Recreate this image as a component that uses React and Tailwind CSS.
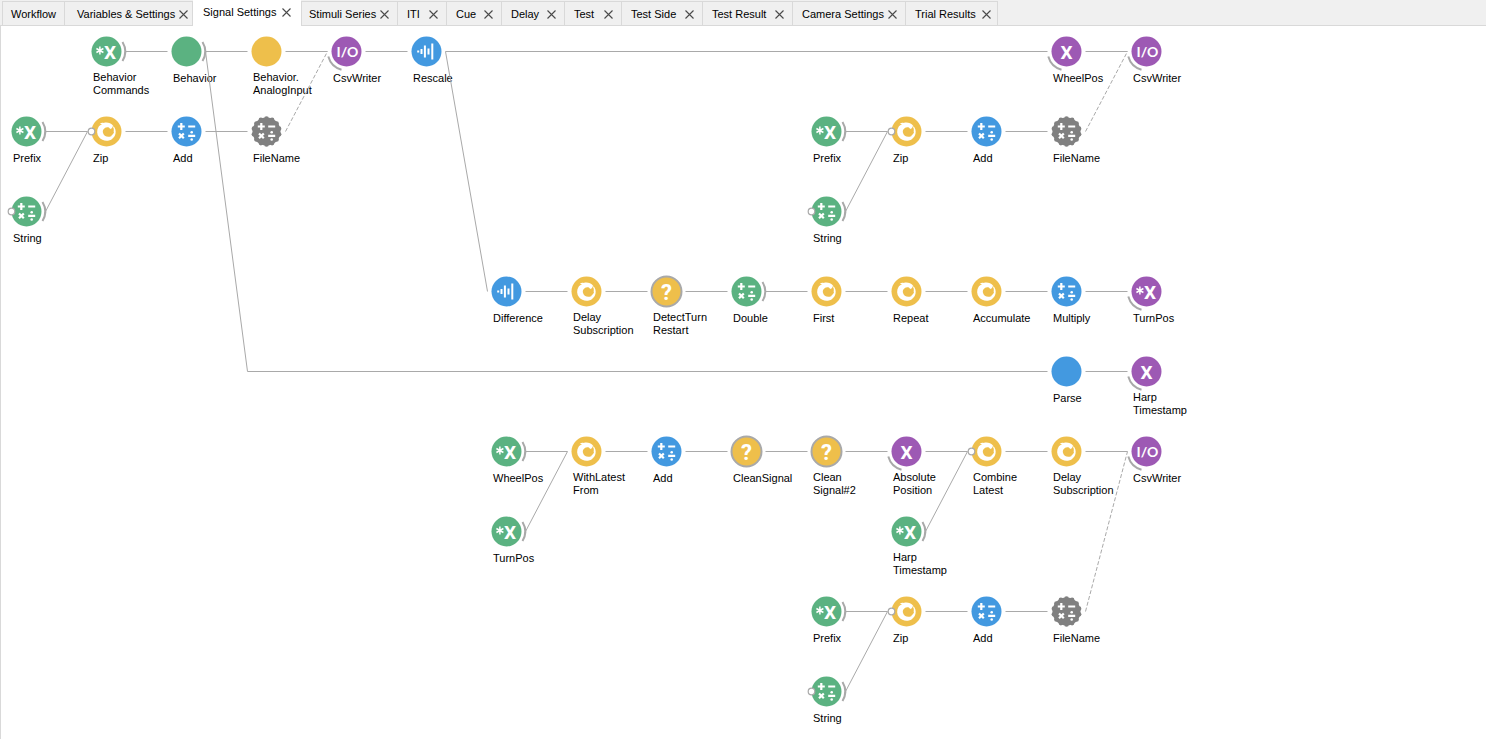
const GRID = 80;
const cx = (col) => 26.5 + col * GRID;
const cy = (row) => 25.5 + row * GRID;

const COLORS = {
  green: '#5bb281',
  yellow: '#eebf4b',
  blue: '#4399e0',
  purple: '#9d59b4',
  gray: '#808080',
};

const TABS = [
  { name: 'Workflow', box: 'w-[63px] border-l pl-2', fixed: true },
  { name: 'Variables & Settings', box: 'w-32 pl-3 pr-1' },
  { name: 'Signal Settings', box: 'w-[108px] pl-2.5 pr-2.5', active: true },
  { name: 'Stimuli Series', box: 'w-[97px] border-l pl-[7px] pr-2' },
  { name: 'ITI', box: 'w-[49px] pl-[9px] pr-2' },
  { name: 'Cue', box: 'w-[55px] pl-[9px] pr-2' },
  { name: 'Delay', box: 'w-[63px] pl-[9px] pr-2' },
  { name: 'Test', box: 'w-[57px] pl-[9px] pr-2' },
  { name: 'Test Side', box: 'w-[81px] pl-[9px] pr-2' },
  { name: 'Test Result', box: 'w-[90px] pl-[9px] pr-2' },
  { name: 'Camera Settings', box: 'w-[113px] pl-[9px] pr-2' },
  { name: 'Trial Results', box: 'w-[92px] pl-[9px] pr-1.5' },
];

// [column, row, colour, glyph, label lines, extras]
const NODES = [
  [1, 0, 'green', 'starx', ['Behavior', 'Commands']],
  [2, 0, 'green', null, ['Behavior']],
  [3, 0, 'yellow', null, ['Behavior.', 'AnalogInput']],
  [4, 0, 'purple', 'io', ['CsvWriter']],
  [5, 0, 'blue', 'wave', ['Rescale']],
  [13, 0, 'purple', 'x', ['WheelPos']],
  [14, 0, 'purple', 'io', ['CsvWriter']],
  [0, 1, 'green', 'starx', ['Prefix']],
  [1, 1, 'yellow', 'swirl', ['Zip'], 'port'],
  [2, 1, 'blue', 'math', ['Add']],
  [3, 1, 'gray', 'math', ['FileName']],
  [0, 2, 'green', 'math', ['String'], 'port'],
  [10, 1, 'green', 'starx', ['Prefix']],
  [11, 1, 'yellow', 'swirl', ['Zip'], 'port'],
  [12, 1, 'blue', 'math', ['Add']],
  [13, 1, 'gray', 'math', ['FileName']],
  [10, 2, 'green', 'math', ['String'], 'port'],
  [6, 3, 'blue', 'wave', ['Difference']],
  [7, 3, 'yellow', 'swirl', ['Delay', 'Subscription']],
  [8, 3, 'yellow', 'question', ['DetectTurn', 'Restart']],
  [9, 3, 'green', 'math', ['Double']],
  [10, 3, 'yellow', 'swirl', ['First']],
  [11, 3, 'yellow', 'swirl', ['Repeat']],
  [12, 3, 'yellow', 'swirl', ['Accumulate']],
  [13, 3, 'blue', 'math', ['Multiply']],
  [14, 3, 'purple', 'starx', ['TurnPos']],
  [13, 4, 'blue', null, ['Parse']],
  [14, 4, 'purple', 'x', ['Harp', 'Timestamp']],
  [6, 5, 'green', 'starx', ['WheelPos']],
  [7, 5, 'yellow', 'swirl', ['WithLatest', 'From']],
  [8, 5, 'blue', 'math', ['Add']],
  [9, 5, 'yellow', 'question', ['CleanSignal']],
  [10, 5, 'yellow', 'question', ['Clean', 'Signal#2']],
  [11, 5, 'purple', 'x', ['Absolute', 'Position']],
  [12, 5, 'yellow', 'swirl', ['Combine', 'Latest'], 'port'],
  [13, 5, 'yellow', 'swirl', ['Delay', 'Subscription']],
  [14, 5, 'purple', 'io', ['CsvWriter']],
  [6, 6, 'green', 'starx', ['TurnPos']],
  [11, 6, 'green', 'starx', ['Harp', 'Timestamp']],
  [10, 7, 'green', 'starx', ['Prefix']],
  [11, 7, 'yellow', 'swirl', ['Zip'], 'port'],
  [12, 7, 'blue', 'math', ['Add']],
  [13, 7, 'gray', 'math', ['FileName']],
  [10, 8, 'green', 'math', ['String'], 'port'],
];

// [from column, from row, to column, to row]
const LINKS = [
  [1, 0, 2, 0], [2, 0, 3, 0], [3, 0, 4, 0], [4, 0, 5, 0], [5, 0, 13, 0], [13, 0, 14, 0],
  [0, 1, 1, 1], [1, 1, 2, 1], [2, 1, 3, 1], [0, 2, 1, 1],
  [10, 1, 11, 1], [11, 1, 12, 1], [12, 1, 13, 1], [10, 2, 11, 1],
  [2, 0, 3, 4], [3, 4, 13, 4], [5, 0, 6, 3],
  [6, 3, 7, 3], [7, 3, 8, 3], [8, 3, 9, 3], [9, 3, 10, 3],
  [10, 3, 11, 3], [11, 3, 12, 3], [12, 3, 13, 3], [13, 3, 14, 3],
  [13, 4, 14, 4],
  [6, 5, 7, 5], [7, 5, 8, 5], [8, 5, 9, 5], [9, 5, 10, 5],
  [10, 5, 11, 5], [11, 5, 12, 5], [12, 5, 13, 5], [13, 5, 14, 5],
  [6, 6, 7, 5], [11, 6, 12, 5],
  [10, 7, 11, 7], [11, 7, 12, 7], [12, 7, 13, 7], [10, 8, 11, 7],
];

const DASHED = [
  [3, 1, 4, 0],
  [13, 1, 14, 0],
  [13, 7, 14, 5],
];

function Link({ ends, dashed }) {
  const [c1, r1, c2, r2] = ends;
  // A link that passes the empty cell (3, 4) bends there and keeps going.
  const x1 = c1 === 3 && r1 === 4 ? cx(3) - 19 : cx(c1) + 19;
  return (
    <line
      x1={x1}
      y1={cy(r1)}
      x2={cx(c2) - 19}
      y2={cy(r2)}
      stroke="#a9a9a9"
      strokeDasharray={dashed ? '4 2' : undefined}
    />
  );
}

function Letters({ children, x = 0, y = 7, size = 19 }) {
  return (
    <text
      x={x}
      y={y}
      fontSize={size}
      fontWeight="700"
      textAnchor="middle"
      fill="#fff"
      className="font-[Roboto,sans-serif]"
    >
      {children}
    </text>
  );
}

function Star() {
  return <path d="M-6.6 -5V3M-10.1 -3L-3.1 1M-10.1 1L-3.1 -3" stroke="#fff" strokeWidth="1.5" />;
}

function Glyph({ kind }) {
  switch (kind) {
    case 'x':
      return <Letters>X</Letters>;
    case 'starx':
      return (
        <>
          <Star />
          <Letters x={3.6}>X</Letters>
        </>
      );
    case 'io':
      return (
        <text x="1" y="5" fontSize="14" fontWeight="700" textAnchor="middle" fill="#fff" className="font-[Lato,sans-serif]">
          I/O
        </text>
      );
    case 'wave':
      return (
        <path
          d="M-8.3 -1V1M-5 -2.5V2.5M-1.6 -6V6M2 -3V3M5.8 -8V8"
          stroke="#fff"
          strokeWidth="2"
        />
      );
    case 'question':
      return <Letters size={22} y={8}>?</Letters>;
    case 'math':
      return (
        <g stroke="#fff" strokeWidth="2.2" fill="#fff">
          <path d="M-8.7 -5H-1.7M-5.2 -8.5V-1.5M1.7 -5H8.7" />
          <path d="M-7.5 2L-2.7 6.8M-2.7 2L-7.5 6.8M1.7 4.4H8.7" />
          <circle cx="5.2" cy="0.8" r="1.3" stroke="none" />
          <circle cx="5.2" cy="8" r="1.3" stroke="none" />
        </g>
      );
    case 'swirl':
      return (
        <>
          <path
            fill="#fff"
            d="M-2.8 -8.6C0.4 -9.6 4.4 -8.6 6.6 -6C8.8 -3.6 9.6 -0.6 9 2.2C8.2 5.6 5.6 8.2 2.4 9C-1.4 9.8 -5.2 8.6 -7.4 5.8C-9.8 2.8 -10 -1.4 -8 -4.6C-7.2 -5.8 -6 -6.6 -4.6 -7C-5.2 -7.6 -6 -7.6 -6.8 -7.2C-5.8 -8.4 -4.2 -8.8 -2.8 -8.6Z"
          />
          <path
            fill="#eebf4b"
            d="M0.6 -4.2C-2.2 -3.8 -4 -1.6 -3.6 1C-3.2 3.8 -0.8 5.2 2 5.2C3.4 5.2 4.6 4.8 5.4 4.2L4.8 3.8C6.4 3.2 7.4 1.6 7.6 0.2L7 0.2C7.6 -1.4 7.4 -3.4 6.4 -4.8L8 -5.2L6.4 -6.6C6.6 -5.2 5.8 -3.2 4.2 -2.6C3.4 -2.8 3.2 -3.2 2.6 -3.8C2 -4.2 1.4 -4.3 0.6 -4.2Z"
          />
        </>
      );
    default:
      return null;
  }
}

const GEAR = Array.from({ length: 14 }, (_, i) => {
  const a = (i * Math.PI) / 7;
  return [12.9 * Math.sin(a), -12.9 * Math.cos(a)];
});

function NodeIcon({ node }) {
  const [col, row, color, glyph, , port] = node;
  const fill = COLORS[color];
  return (
    <g transform={`translate(${cx(col)} ${cy(row)})`}>
      {color === 'gray' ? (
        <g fill={fill}>
          <circle r="14" />
          {GEAR.map(([x, y], i) => (
            <circle key={i} cx={x} cy={y} r="2.3" />
          ))}
        </g>
      ) : (
        <circle r="15" fill={fill} />
      )}
      {glyph === 'question' && <circle r="15" fill="none" stroke="#a9a9a9" strokeWidth="2" />}
      <Glyph kind={glyph} />
      {color === 'green' && (
        <path d="M16 -9.5A18.5 18.5 0 0 1 16 9.5" fill="none" stroke="#a9a9a9" strokeWidth="2" />
      )}
      {color === 'purple' && (
        <path d="M-18.2 5A18.9 18.9 0 0 0 -5 18.2" fill="none" stroke="#a9a9a9" strokeWidth="2" />
      )}
      {port && <circle cx="-15" r="3.3" fill="#fff" stroke="#a9a9a9" strokeWidth="1.2" />}
    </g>
  );
}

function CloseIcon() {
  return (
    <svg viewBox="0 0 9 9" className="size-[9px]" aria-hidden="true">
      <path d="M0.5 0.5L8.5 8.5M8.5 0.5L0.5 8.5" stroke="#4a4a4a" strokeWidth="1.1" />
    </svg>
  );
}

function Tab({ tab }) {
  const look = tab.active
    ? 'h-[26px] bg-white pb-px'
    : 'mt-px h-[25px] border-y border-r border-[#d9d9d9] bg-[#f0f0f0] pt-px';
  return (
    <div className={`flex shrink-0 items-center justify-between whitespace-nowrap ${look} ${tab.box}`}>
      <button type="button" role="tab" aria-selected={!!tab.active}>
        {tab.name}
      </button>
      {!tab.fixed && (
        <button type="button" aria-label={`Close ${tab.name}`}>
          <CloseIcon />
        </button>
      )}
    </div>
  );
}

export default function App() {
  return (
    <div className="flex min-h-screen flex-col bg-white font-['Liberation_Sans',Arial,sans-serif] text-[11px] leading-[13px] text-black">
      <nav className="flex bg-[#f0f0f0]" role="tablist">
        <div className="w-0.5 border-b border-[#d9d9d9]" />
        {TABS.map((tab) => (
          <Tab key={tab.name} tab={tab} />
        ))}
        <div className="grow border-b border-[#d9d9d9]" />
      </nav>
      <main className="relative grow overflow-hidden border-l border-[#d9d9d9]">
        <svg className="absolute inset-y-0 -left-px h-full w-full" aria-hidden="true">
          {NODES.map((node) => (
            <NodeIcon key={`${node[0]}-${node[1]}`} node={node} />
          ))}
        </svg>
        {NODES.map(([col, row, , , lines]) => (
          <div
            key={`${col}-${row}`}
            className="absolute whitespace-nowrap"
            style={{ left: col * GRID + 12, top: row * GRID + (lines.length > 1 ? 45 : 46) }}
          >
            {lines.map((line) => (
              <div key={line}>{line}</div>
            ))}
          </div>
        ))}
        <svg className="pointer-events-none absolute inset-y-0 -left-px h-full w-full" aria-hidden="true">
          {LINKS.map((ends) => (
            <Link key={ends.join()} ends={ends} />
          ))}
          {DASHED.map((ends) => (
            <Link key={ends.join()} ends={ends} dashed />
          ))}
        </svg>
      </main>
    </div>
  );
}
